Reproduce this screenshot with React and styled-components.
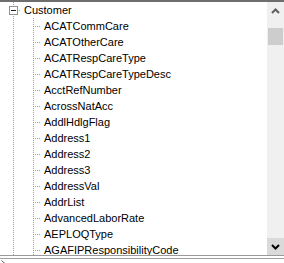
import React from "react";
import styled, { createGlobalStyle } from "styled-components";

const GlobalStyle = createGlobalStyle`
  html, body { margin: 0; padding: 0; background: #ffffff; }
  body { font-family: "Liberation Sans", Arial, sans-serif; }
`;

const dotV = "repeating-linear-gradient(to bottom, #a0a0a0 0 1px, transparent 1px 2px)";
const dotH = "repeating-linear-gradient(to right, #a0a0a0 0 1px, transparent 1px 2px)";

const Frame = styled.div`
  width: 284px;
  height: 263px;
  display: flex;
  flex-direction: column;
  overflow: hidden;
  background: #ffffff;
`;

const TreePanel = styled.div`
  box-sizing: border-box;
  height: 256px;
  flex: none;
  display: flex;
  border-top: 2px solid #6e6e6e;
  border-bottom: 1px solid #9a9a9a;
  background: #ffffff;
`;

const TreeArea = styled.div`
  flex: 1;
  overflow: hidden;
  display: flex;
  flex-direction: column;
`;

const Row = styled.div`
  display: flex;
  align-items: center;
  height: 16px;
  flex: none;
`;

const Guide = styled.div`
  width: 20px;
  height: 16px;
  flex: none;
  background: ${dotV} 13px 0 / 1px 16px no-repeat;
`;

const Connector = styled.div`
  width: 20px;
  height: 16px;
  flex: none;
  display: flex;
  align-items: center;
  background:
    ${dotV} 13px 0 / 1px 16px no-repeat,
    ${dotH} 13px 8px / 7px 1px no-repeat;
`;

const Expander = styled.div`
  box-sizing: border-box;
  width: 9px;
  height: 9px;
  margin-left: 9px;
  margin-top: 1px;
  border: 1px solid #919191;
  background: #ffffff;
  display: flex;
  align-items: center;
  justify-content: center;
  &::after {
    content: "";
    width: 5px;
    height: 1px;
    background: #1e1e1e;
  }
`;

const Label = styled.span`
  margin-left: 2px;
  padding: 0 2px;
  font-size: 11px;
  line-height: 16px;
  color: #000000;
  white-space: nowrap;
`;

const Scrollbar = styled.div`
  width: 17px;
  flex: none;
  display: flex;
  flex-direction: column;
  background: #f0f0f0;
`;

const ArrowButton = styled.div`
  height: 17px;
  flex: none;
  display: flex;
  align-items: center;
  justify-content: center;
  background: ${(p) => (p.$hover ? "#dadada" : "#f0f0f0")};
  color: ${(p) => (p.$hover ? "#000000" : "#606060")};
`;

const Track = styled.div`
  flex: 1;
  display: flex;
  flex-direction: column;
  align-items: center;
`;

const Thumb = styled.div`
  width: 15px;
  height: 17px;
  margin-top: 9px;
  background: #cdcdcd;
`;

const Gap = styled.div`
  height: 2px;
  flex: none;
`;

const Divider = styled.div`
  height: 1px;
  flex: none;
  background: #a0a0a0;
`;

const Footer = styled.div`
  flex: 1;
  display: flex;
  padding: 1px 0 0 1px;
`;

const Chevron = ({ up }) => (
  <svg width="9" height="6" viewBox="0 0 9 6" style={{ display: "block" }}>
    <path
      d={up ? "M1 5 L4.5 1.5 L8 5" : "M1 1 L4.5 4.5 L8 1"}
      fill="none"
      stroke="currentColor"
      strokeWidth="2"
    />
  </svg>
);

const children = [
  "ACATCommCare",
  "ACATOtherCare",
  "ACATRespCareType",
  "ACATRespCareTypeDesc",
  "AcctRefNumber",
  "AcrossNatAcc",
  "AddlHdlgFlag",
  "Address1",
  "Address2",
  "Address3",
  "AddressVal",
  "AddrList",
  "AdvancedLaborRate",
  "AEPLOQType",
  "AGAFIPResponsibilityCode",
];

export default function App() {
  return (
    <>
      <GlobalStyle />
      <Frame>
        <TreePanel>
          <TreeArea>
            <Row>
              <Connector>
                <Expander />
              </Connector>
              <Label>Customer</Label>
            </Row>
            {children.map((name) => (
              <Row key={name}>
                <Guide />
                <Connector />
                <Label>{name}</Label>
              </Row>
            ))}
          </TreeArea>
          <Scrollbar>
            <ArrowButton>
              <Chevron up />
            </ArrowButton>
            <Track>
              <Thumb />
            </Track>
            <ArrowButton $hover>
              <Chevron />
            </ArrowButton>
          </Scrollbar>
        </TreePanel>
        <Gap />
        <Divider />
        <Footer>
          <svg width="5" height="4" viewBox="0 0 5 4">
            <path d="M0.5 0.5 L4 3.5" stroke="#606060" strokeWidth="1" />
          </svg>
        </Footer>
      </Frame>
    </>
  );
}
